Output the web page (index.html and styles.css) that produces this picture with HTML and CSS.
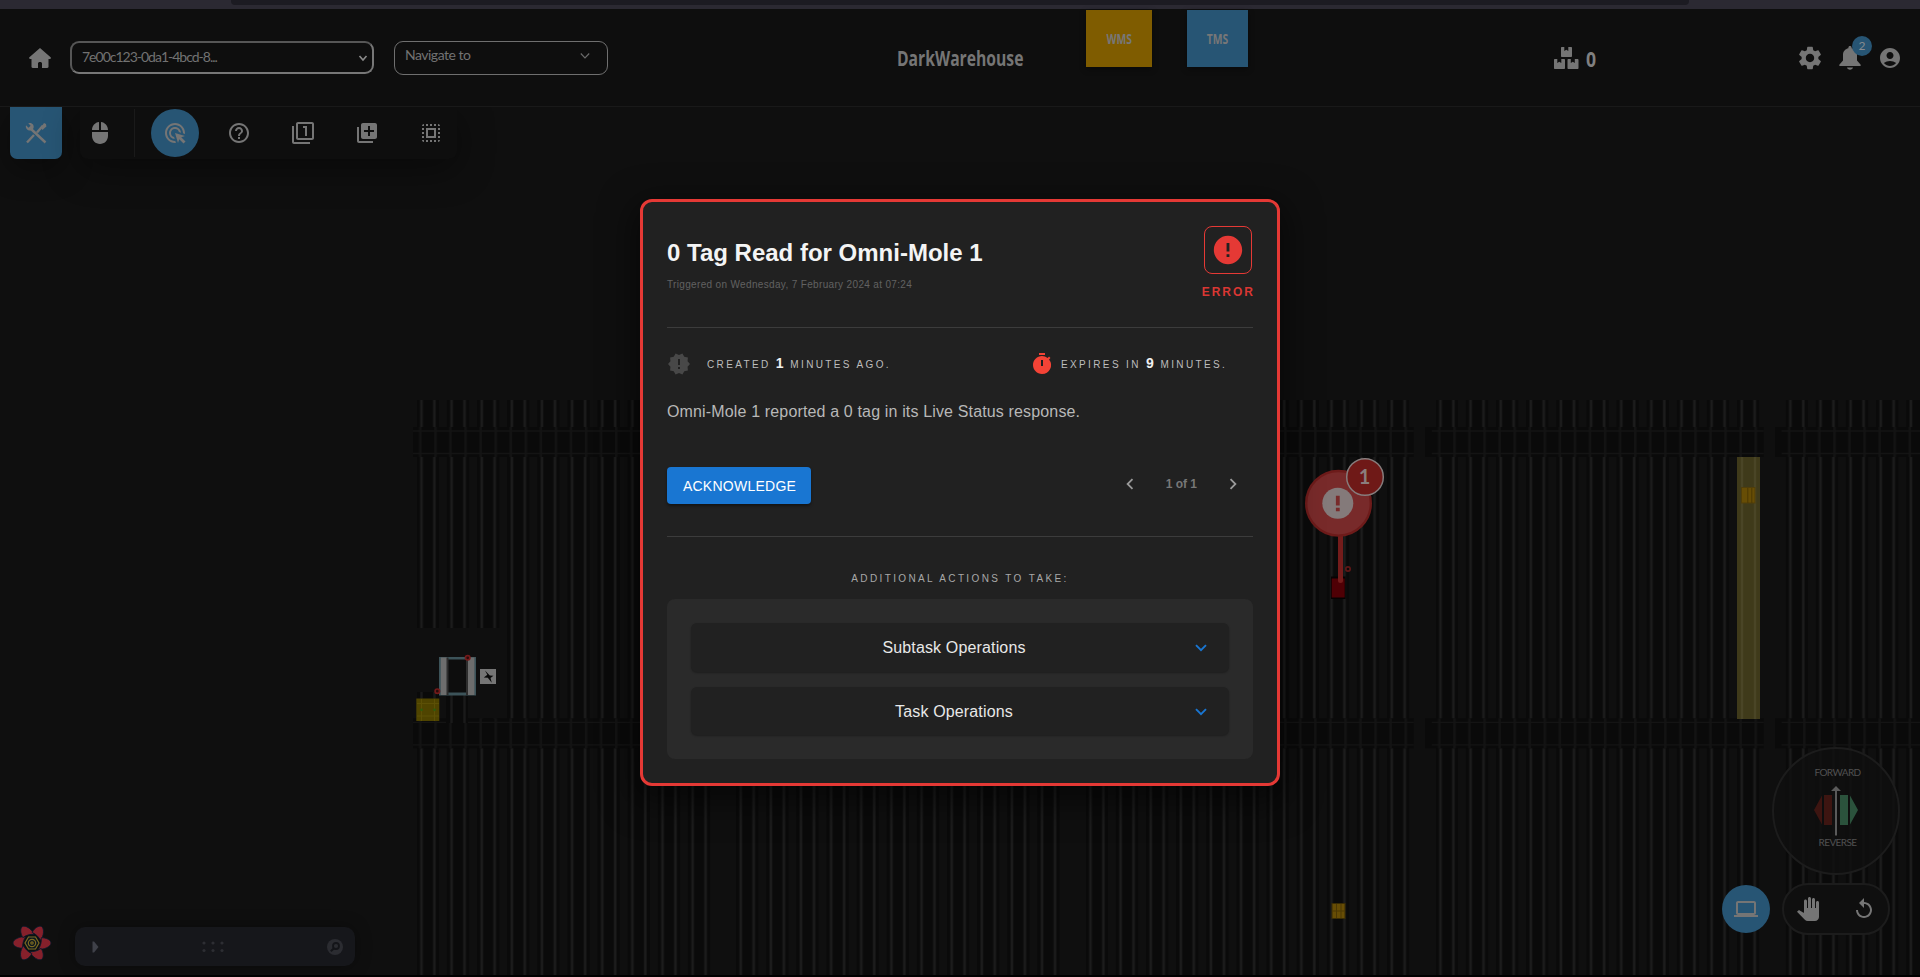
FILE: index.html
```html
<!DOCTYPE html>
<html lang="en">
<head>
<meta charset="utf-8">
<title>DarkWarehouse</title>
<link rel="stylesheet" href="styles.css">
</head>
<body>
<svg class="map" width="1920" height="977" viewBox="0 0 1920 977">
  <defs>
    <pattern id="rails" width="30.13" height="40" patternUnits="userSpaceOnUse">
      <rect width="22.5" height="40" fill="#0a0a0a"/>
      <rect x="3.200" width="3" height="40" fill="#151515"/><rect x="3.900" width="1.700" height="40" fill="#1c1c1c"/>
      <rect x="16.200" width="3" height="40" fill="#151515"/><rect x="16.800" width="1.700" height="40" fill="#1c1c1c"/>
    </pattern>
    <pattern id="ties" width="30.13" height="40" patternUnits="userSpaceOnUse">
      <rect x="2.5" width="2.4" height="40" fill="#131313"/>
      <rect x="17.5" width="2.4" height="40" fill="#131313"/>
    </pattern>
    <g id="band">
      <rect x="-10.5" width="338.5" height="30" fill="#0a0a0a"/>
      <rect width="328" height="30" fill="url(#ties)"/>
      <path d="M-4 4H328M-4 26.5H328" stroke="#141414" stroke-width="1.3"/>
    </g>
    <g id="aisle">
      <rect width="323.8" height="575" fill="url(#rails)"/>
      <use href="#band" y="27"/>
      <use href="#band" y="318.3"/>
    </g>
  </defs>
  <rect width="1920" height="977" fill="#0f0f0f"/>
  <svg x="413" y="400" width="300.5" height="575"><use href="#aisle" x="3.700"/></svg>
  <use href="#aisle" x="736" y="400"/>
  <use href="#aisle" x="1085.7" y="400"/>
  <use href="#aisle" x="1435.7" y="400"/>
  <use href="#aisle" x="1785.6" y="400"/>

  <path d="M413 628H507V718H413z" fill="#0f0f0f"/>
  <path d="M417 692h22v26h-22zM446 695h22v28h-22z" fill="#0a0a0a"/>
  <path d="M421.5 692v8M434.5 692v8M451.5 695v28M464.5 695v28" stroke="#1a1a1a" stroke-width="2.5"/>
  <rect x="416.3" y="698.5" width="23" height="22.5" fill="#4f4400"/>
  <path d="M417 703.5h22M417 716h22M421.5 699v22M434.5 699v22" stroke="#5c5006"/>
  <circle cx="421.5" cy="709.8" r="1.4" fill="#2f5a0c"/><circle cx="434.5" cy="709.8" r="1.4" fill="#2f5a0c"/>
  <rect x="439" y="657" width="37" height="38.5" fill="#3c5359"/>
  <rect x="440.8" y="657.5" width="6.4" height="37.5" fill="#6d6d6d"/>
  <rect x="447" y="659.5" width="20.5" height="33" fill="#0d0d0d"/>
  <rect x="446.5" y="657.5" width="2" height="37.5" fill="#2d2d2d"/>
  <rect x="468" y="657.5" width="6.4" height="37.5" fill="#6d6d6d"/>
  <rect x="466" y="657.5" width="2" height="37.5" fill="#2d2d2d"/>
  <g fill="#2a0b0b" stroke="#731a1a" stroke-width="1.7"><circle cx="467.7" cy="657.8" r="2.2"/><circle cx="437.3" cy="691.2" r="2.2"/></g>
  <rect x="480" y="669" width="16" height="15" fill="#757575"/>
  <path d="M485 670.500l2.300 4.200-3.500 2.800 4 .2 4 5-1.300-4.600 2.900-2.400-3.600-.3z" fill="#080808"/>

  <rect x="1737" y="457" width="23" height="262" fill="#3f3a1a"/>
  <path d="M1742 457V719M1755 457V719" stroke="#4a4526" stroke-width="2.5"/>
  <rect x="1741.5" y="487.5" width="13.5" height="15.5" fill="#674d05" stroke="#503e0a"/>
  <path d="M1747.8 488v15M1751.8 488v15" stroke="#4c3804"/>
  <rect x="1332" y="903.5" width="13" height="15" fill="#674d05" stroke="#3a2c04"/>
  <path d="M1336.5 904v14M1341 904v14M1332 911h13" stroke="#4c3804"/>

  <rect x="1331" y="576.5" width="14.5" height="22.5" fill="#060203"/>
  <rect x="1331.7" y="578.5" width="13" height="19" fill="#4f0005"/>
  <circle cx="1348" cy="569" r="2.2" fill="none" stroke="#5f1717" stroke-width="1.700"/>
  <path d="M1340.5 534V580.5" stroke="#741c1b" stroke-width="5" stroke-linecap="round"/>
  <circle cx="1338.5" cy="503.3" r="32.3" fill="#782a2a" stroke="#6d1b1a" stroke-width="2.4"/>
  <circle cx="1337.8" cy="503.3" r="15.5" fill="#847a7a"/>
  <path d="M1335.9 495.8h3.8v9.600h-3.8zM1335.9 507.8h3.8v3.500h-3.8z" fill="#782a2a"/>
  <circle cx="1365" cy="477" r="18.3" fill="#6f1917" stroke="#867c7c" stroke-width="1.5"/>
  <text x="1364.5" y="484" class="pin-count">1</text>
  <rect y="975" width="1920" height="2" fill="#000"/>
</svg>

<div class="app">
  <div class="chrome"><div class="chrome-tab"></div></div>
  <header class="header">
    <div class="left">
      <svg class="home" viewBox="0 0 22 20" width="22" height="20"><path fill="#757575" d="M11 0 .4 9.300c-.6.6-.3 1.700.6 1.700h1.500v7.800c0 .7.500 1.200 1.200 1.200h5.300v-4.500c0-1 .8-1.500 2-1.500s2 .5 2 1.500V20h5.300c.7 0 1.200-.5 1.200-1.200V11H21c.9 0 1.200-1.100.6-1.700z"/></svg>
      <div class="select device"><span>7e00c123-0da1-4bcd-8...</span><svg width="10" height="8" viewBox="0 0 10 8"><path d="M1.500 2 5 6 8.500 2" fill="none" stroke="#8a8a8a" stroke-width="1.600"/></svg></div>
      <div class="select nav"><span>Navigate to</span><svg width="10" height="8" viewBox="0 0 10 8"><path d="M.8 1.500 5 6 9.200 1.500" fill="none" stroke="#6b6b6b" stroke-width="1.100"/></svg></div>
    </div>
    <div class="brand"><span class="narrow">DarkWarehouse</span></div>
    <div class="tile wms"><span class="narrow">WMS</span></div>
    <div class="tile tms"><span class="narrow">TMS</span></div>
    <div class="stock">
      <svg width="25" height="22" viewBox="0 0 25 22" fill="#757575"><path d="M7 1c0-.6.400-1 1-1h2.300v4l2-1.200 2 1.200V0H17c.6 0 1 .4 1 1v8c0 .6-.4 1-1 1H8c-.6 0-1-.4-1-1zM0 13c0-.6.400-1 1-1h2.300v4l2-1.200 2 1.200v-4H10c.6 0 1 .4 1 1v8c0 .6-.4 1-1 1H1c-.6 0-1-.4-1-1zM13.500 13c0-.6.400-1 1-1h2.300v4l2-1.200 2 1.200v-4h2.700c.6 0 1 .4 1 1v8c0 .6-.4 1-1 1h-9c-.6 0-1-.4-1-1z"/></svg>
      <span class="narrow">0</span>
    </div>
    <div class="tools">
      <svg viewBox="0 0 24 24" width="28" height="28" fill="#757575"><path d="M19.140 12.940c.04-.3.060-.61.060-.94s-.02-.64-.07-.94l2.030-1.580c.18-.14.230-.41.120-.61l-1.920-3.320c-.12-.22-.37-.29-.59-.22l-2.390.960c-.5-.38-1.030-.7-1.620-.94l-.36-2.540A.484.484 0 0 0 13.920 2.400h-3.840c-.24 0-.43.170-.47.410l-.36 2.540c-.59.240-1.130.570-1.620.940l-2.390-.96c-.22-.08-.47 0-.59.220L2.740 8.870c-.12.210-.08.470.120.610l2.030 1.580c-.05.300-.09.630-.09.940s.02.640.07.940l-2.030 1.580c-.18.140-.23.410-.12.610l1.920 3.320c.12.220.370.290.590.220l2.390-.96c.5.380 1.030.700 1.620.940l.36 2.540c.05.240.240.410.480.410h3.840c.24 0 .44-.17.470-.41l.36-2.540c.59-.24 1.130-.56 1.620-.94l2.390.960c.22.080.470 0 .59-.22l1.920-3.320c.12-.22.070-.47-.12-.61zM12 15.600c-1.980 0-3.600-1.620-3.600-3.600s1.620-3.600 3.600-3.600 3.600 1.620 3.600 3.600-1.620 3.600-3.600 3.600z"/></svg>
      <div class="bell"><svg viewBox="0 0 22 24" width="22" height="24" fill="#757575"><path d="M11 0c-1 0-1.600.7-1.600 1.500v.8C6 3 4 5.700 4 9v5.500L.5 18.500c-.7.800-.3 1.500.5 1.500h20c.8 0 1.200-.7.500-1.500L18 14.500V9c0-3.300-2-6-5.400-6.700v-.8C12.600.7 12 0 11 0zM8 21.500c.3 1.300 1.500 2.200 3 2.200s2.700-.9 3-2.200z"/></svg><span class="badge">2</span></div>
      <svg viewBox="0 0 24 24" width="24" height="24" fill="#757575"><path d="M12 2C6.480 2 2 6.480 2 12s4.480 10 10 10 10-4.480 10-10S17.520 2 12 2zm0 4c1.930 0 3.500 1.570 3.500 3.500S13.930 13 12 13s-3.500-1.570-3.500-3.500S10.070 6 12 6zm0 14c-2.030 0-4.430-.82-6.140-2.880C7.550 15.800 9.680 15 12 15s4.450.8 6.140 2.120C16.430 19.180 14.030 20 12 20z"/></svg>
    </div>
  </header>

  <nav class="toolbar">
    <div class="main-tool"><svg viewBox="0 0 24 24" width="24" height="24"><g fill="none" stroke="#757575" stroke-width="2.400"><path d="M3 21.500 10 14M13 11.500l6-7M6.500 7.500 21.500 21.500"/></g><path fill="#757575" d="M17 6.500 20 2l2 1 .4 2.500-4 3.500zM2 4.300 4.500 6.800 6.600 4.800 4.300 2.300C6 1.600 8 2 9 3.600c.8 1.200.9 2.600.4 3.800L7.300 9.300C5.800 9.900 4 9.500 2.900 8.200 1.900 7.100 1.500 5.600 2 4.300z"/></svg></div>
    <div class="panel">
      <div class="tool"><svg viewBox="0 0 24 24" width="24" height="24" fill="#757575"><path d="M13 1.070V9h7c0-4.080-3.050-7.440-7-7.930zM4 15c0 4.420 3.580 8 8 8s8-3.580 8-8v-4H4zm7-13.930C7.050 1.560 4 4.920 4 9h7z"/></svg></div>
      <div class="divider"></div>
      <div class="tool active"><svg viewBox="0 0 24 24" width="24" height="24" fill="#757575"><path d="M11.710 17.990A5.993 5.993 0 0 1 6 12c0-3.310 2.690-6 6-6 3.220 0 5.840 2.530 5.990 5.710l-2.100-.63a3.999 3.999 0 1 0-4.810 4.810zM22 12c0 .3-.01.600-.04.900l-1.970-.59c.010-.1.010-.21.010-.31 0-4.420-3.580-8-8-8s-8 3.580-8 8 3.580 8 8 8c.1 0 .21 0 .31-.01l.59 1.970c-.3.030-.6.040-.9.040-5.520 0-10-4.480-10-10S6.480 2 12 2s10 4.480 10 10zm-3.770 4.260L22 15l-10-3 3 10 1.260-3.770 4.270 4.270 1.980-1.980z"/></svg></div>
      <div class="tool"><svg viewBox="0 0 24 24" width="24" height="24" fill="#757575"><path d="M11 18h2v-2h-2v2zm1-16C6.480 2 2 6.480 2 12s4.480 10 10 10 10-4.480 10-10S17.520 2 12 2zm0 18c-4.410 0-8-3.590-8-8s3.590-8 8-8 8 3.590 8 8-3.590 8-8 8zm0-14c-2.210 0-4 1.790-4 4h2c0-1.100.9-2 2-2s2 .9 2 2c0 2-3 1.750-3 5h2c0-2.250 3-2.500 3-5 0-2.210-1.790-4-4-4z"/></svg></div>
      <div class="tool"><svg viewBox="0 0 24 24" width="24" height="24" fill="#757575"><path d="M3 5H1v16c0 1.100.9 2 2 2h16v-2H3V5zm11 10h2V5h-4v2h2v8zm7-14H7c-1.100 0-2 .9-2 2v14c0 1.100.9 2 2 2h14c1.100 0 2-.9 2-2V3c0-1.100-.9-2-2-2zm0 16H7V3h14v14z"/></svg></div>
      <div class="tool"><svg viewBox="0 0 24 24" width="24" height="24" fill="#757575"><path d="M4 6H2v14c0 1.100.9 2 2 2h14v-2H4V6zm16-4H8c-1.100 0-2 .9-2 2v12c0 1.100.9 2 2 2h12c1.100 0 2-.9 2-2V4c0-1.100-.9-2-2-2zm-1 9h-4v4h-2v-4H9V9h4V5h2v4h4v2z"/></svg></div>
      <div class="tool"><svg viewBox="0 0 24 24" width="24" height="24" fill="#757575"><path d="M3 5h2V3c-1.100 0-2 .9-2 2zm0 8h2v-2H3v2zm4 8h2v-2H7v2zM3 9h2V7H3v2zm10-6h-2v2h2V3zm6 0v2h2c0-1.100-.9-2-2-2zM5 21v-2H3c0 1.100.9 2 2 2zm-2-4h2v-2H3v2zM9 3H7v2h2V3zm2 18h2v-2h-2v2zm8-8h2v-2h-2v2zm0 8c1.100 0 2-.9 2-2h-2v2zm0-12h2V7h-2v2zm0 8h2v-2h-2v2zm-4 4h2v-2h-2v2zm0-16h2V3h-2v2zM7 17h10V7H7v10zm2-8h6v6H9V9z"/></svg></div>
    </div>
  </nav>

  <footer class="bottom">
    <div class="dev">
      <svg class="flower" viewBox="-20 -18 40 36" width="40" height="36">
        <g fill="#85202b" stroke="#071a2b" stroke-width=".8">
          <path id="petal" d="M-6.500-6C-12-7-19-3.500-19 0c0 3 5 5.500 9.800 5.200C-9.800 1-8.500-3-6.500-6z"/>
          <use href="#petal" transform="rotate(60)"/><use href="#petal" transform="rotate(120)"/><use href="#petal" transform="rotate(180)"/><use href="#petal" transform="rotate(240)"/><use href="#petal" transform="rotate(300)"/>
        </g>
        <path d="M-8-.1-4-7H4L8 0 4 7H-4z" fill="#0b1620"/>
        <g fill="none" stroke="#7c6a20" stroke-width="1.200"><path d="M-7 0-3.500-6H3.500L7 0 3.500 6H-3.500z"/><circle r="3.700"/><circle r="1.200"/></g>
      </svg>
      <div class="dock">
        <svg width="7" height="12" viewBox="0 0 7 12"><path d="M.5.5h1.500L6.500 6 2 11.500H.5z" fill="#3f4149"/></svg>
        <svg width="22" height="12" viewBox="0 0 22 12" fill="#2d2e33"><circle cx="2" cy="2" r="1.600"/><circle cx="11" cy="2" r="1.600"/><circle cx="20" cy="2" r="1.600"/><circle cx="2" cy="9.500" r="1.600"/><circle cx="11" cy="9.500" r="1.600"/><circle cx="20" cy="9.500" r="1.600"/></svg>
        <svg width="16" height="16" viewBox="0 0 16 16"><circle cx="8" cy="8" r="8" fill="#2b2c31"/><circle cx="9" cy="7" r="3" fill="none" stroke="#141519" stroke-width="1.800"/><path d="M7 9.200 3.800 12.300" stroke="#141519" stroke-width="2"/></svg>
      </div>
    </div>
    <div class="controls">
      <div class="joystick">
        <span>FORWARD</span>
        <svg width="44" height="50" viewBox="0 0 44 50"><path d="M8 9.500v29L0 24z M10 9h8v30h-8z" fill="#3d1511"/><path d="M26 9h8v30h-8z M36 9.500v29L44 24z" fill="#2b523c"/><path d="M21 4h2v45.500h-2z M17 5 22 0 27 5z" fill="#5a5a5a"/></svg>
        <span>REVERSE</span>
      </div>
      <div class="row">
        <div class="round"><svg viewBox="0 0 24 24" width="24" height="24" fill="#757575"><path d="M20 18c1.100 0 1.990-.9 1.990-2L22 6c0-1.100-.9-2-2-2H4c-1.100 0-2 .9-2 2v10c0 1.100.9 2 2 2H0v2h24v-2h-4zM4 6h16v10H4V6z"/></svg></div>
        <div class="pill">
          <svg viewBox="0 0 24 24" width="24" height="24" fill="#757575"><path d="M23 5.500V20c0 2.200-1.800 4-4 4h-7.300c-1.080 0-2.100-.43-2.850-1.190L1 14.830s1.260-1.230 1.300-1.250c.22-.19.490-.29.790-.29.220 0 .42.060.600.160.04.010 4.310 2.460 4.310 2.460V4c0-.83.670-1.500 1.500-1.500S11 3.170 11 4v7h1V1.500c0-.83.670-1.500 1.500-1.500S15 .670 15 1.500V11h1V2.500c0-.83.670-1.500 1.500-1.500s1.500.67 1.500 1.500V11h1V5.500c0-.83.670-1.500 1.500-1.500s1.500.67 1.500 1.500z"/></svg>
          <svg viewBox="0 0 24 24" width="24" height="24" fill="#757575"><path d="M12 5V1L7 6l5 5V7c3.310 0 6 2.690 6 6s-2.690 6-6 6-6-2.690-6-6H4c0 4.420 3.580 8 8 8s8-3.580 8-8-3.580-8-8-8z"/></svg>
        </div>
      </div>
    </div>
  </footer>
</div>

<section class="modal">
  <div class="head">
    <div>
      <h1>0 Tag Read for Omni-Mole 1</h1>
      <p class="when">Triggered on Wednesday, 7 February 2024 at 07:24</p>
    </div>
    <div class="level">
      <div class="level-box"><svg viewBox="0 0 24 24" width="34" height="34" fill="#e53935"><path d="M12 2C6.480 2 2 6.480 2 12s4.480 10 10 10 10-4.480 10-10S17.520 2 12 2zm1 15h-2v-2h2v2zm0-4h-2V7h2v6z"/></svg></div>
      <span>ERROR</span>
    </div>
  </div>
  <div class="times">
    <div class="time created"><svg viewBox="0 0 24 24" width="24" height="24" fill="#484848"><path d="m23 12-2.440-2.780.34-3.680-3.610-.82-1.890-3.180L12 3 8.600 1.540 6.710 4.720l-3.610.81.340 3.680L1 12l2.440 2.780-.34 3.690 3.610.82 1.890 3.180L12 21l3.400 1.460 1.890-3.180 3.610-.82-.34-3.680zm-10 5h-2v-2h2v2zm0-4h-2V7h2v6z"/></svg><span>CREATED <b>1</b> MINUTES AGO.</span></div>
    <div class="time expires"><svg viewBox="0 0 24 24" width="24" height="24" fill="#f44336"><path d="M9 1h6v2H9zM19.030 7.390l1.420-1.420c-.43-.51-.9-.99-1.410-1.410l-1.420 1.420A8.962 8.962 0 0 0 12 4c-4.970 0-9 4.030-9 9s4.020 9 9 9a8.994 8.994 0 0 0 7.030-14.610zM13 14h-2V8h2v6z"/></svg><span>EXPIRES IN <b>9</b> MINUTES.</span></div>
  </div>
  <p class="message">Omni-Mole 1 reported a 0 tag in its Live Status response.</p>
  <div class="actions">
    <button class="ack">ACKNOWLEDGE</button>
    <div class="pager">
      <svg viewBox="0 0 24 24" width="22" height="22" fill="#9a9a9a"><path d="M15.410 7.410 14 6l-6 6 6 6 1.410-1.410L10.830 12z"/></svg>
      <span>1 of 1</span>
      <svg viewBox="0 0 24 24" width="22" height="22" fill="#9a9a9a"><path d="M10 6 8.590 7.410 13.170 12l-4.580 4.590L10 18l6-6z"/></svg>
    </div>
  </div>
  <div class="more">ADDITIONAL ACTIONS TO TAKE:</div>
  <div class="ops">
    <div class="op"><span>Subtask Operations</span><svg width="12" height="8" viewBox="0 0 12 8"><path d="M1 1.200 6 6.200l5-5" fill="none" stroke="#1976d2" stroke-width="1.900"/></svg></div>
    <div class="op"><span>Task Operations</span><svg width="12" height="8" viewBox="0 0 12 8"><path d="M1 1.200 6 6.200l5-5" fill="none" stroke="#1976d2" stroke-width="1.900"/></svg></div>
  </div>
</section>
</body>
</html>
```
FILE: styles.css
```css
* { box-sizing: border-box; }
html, body { margin: 0; height: 977px; overflow: hidden; background: #0f0f0f; }
body { position: relative; font-family: "Liberation Sans", Arial, sans-serif; }
svg { display: block; flex: none; }
h1, p { margin: 0; }

.map { position: absolute; inset: 0; }
.pin-count { font: bold 20px Lato, sans-serif; fill: #8a7d7d; text-anchor: middle; }

.app { position: relative; height: 977px; display: flex; flex-direction: column; }
.chrome { height: 9px; background: #2b2932; padding: 0 231px 0 231px; }
.chrome-tab { height: 5px; background: #1c1b22; border-radius: 0 0 4px 4px; }

.header {
  position: relative; z-index: 2; height: 98px; display: flex; background: #0e0e0e;
  border-bottom: 1px solid #191919;
}
.left { display: flex; width: 897px; padding-left: 29px; align-items: flex-start; }
.home { margin-top: 39px; }
.select {
  display: flex; justify-content: space-between; color: #727272;
  font-family: Lato, sans-serif; font-size: 14px; letter-spacing: -1px;
}
.device {
  margin: 32px 0 0 19px; width: 304px; height: 33px; border-radius: 9px;
  border: 2px solid; border-color: #565656 #777 #777 #565656; padding: 5px 4px 0 10px;
}
.device span { line-height: 18px; }
.device svg { margin-top: 6px; }
.nav {
  margin: 32px 0 0 20px; width: 214px; height: 34px; border-radius: 9px;
  border: 1px solid #6f6f6f; padding: 4px 17px 0 10px; letter-spacing: -0.5px;
}
.nav span { line-height: 18px; }
.nav svg { margin-top: 6px; }
.narrow { display: inline-block; transform: scaleX(.74); transform-origin: 50% 50%; }
.brand {
  width: 189px; padding-top: 36px; font: bold 21.5px/26px "Open Sans", sans-serif;
  color: #757575; white-space: nowrap;
}
.brand .narrow { transform: scaleX(.73); transform-origin: 0 50%; }
.tile {
  margin-top: 1px; height: 57px; text-align: center; color: #777;
  font: bold 14px/57px "Open Sans", sans-serif; box-shadow: 0 2px 6px rgba(0,0,0,.4);
}
.wms { width: 66px; background: #7f5c00; }
.tms { width: 61px; margin-left: 35px; background: #275574; }
.stock {
  display: flex; gap: 7px; margin: 38px 0 0 306px; width: 242px;
  font: bold 22px/23px "Open Sans", sans-serif; color: #808080;
}
.stock .narrow { transform: scaleX(.8); transform-origin: 0 50%; }
.tools { display: flex; align-items: center; height: 98px; gap: 15px; }
.bell { position: relative; margin-right: 2px; }
.badge {
  position: absolute; left: 13px; top: -10px; width: 20px; height: 20px; border-radius: 50%;
  background: #275574; color: #868b8f; font: 12px/20px Lato, sans-serif; text-align: center;
}

.toolbar { display: flex; padding-left: 10px; gap: 18px; height: 52px; }
.main-tool {
  width: 52px; display: grid; place-items: center; background: #275574; border-radius: 0 0 7px 7px;
  box-shadow: 0 10px 30px rgba(0,0,0,.35);
}
.panel {
  width: 377px; display: flex; align-items: center; background: #0e0e0e; border-radius: 0 0 8px 8px;
  box-shadow: 0 10px 36px rgba(0,0,0,.4);
}
.tool { width: 48px; height: 48px; margin-right: 16px; display: grid; place-items: center; border-radius: 50%; flex: none; }
.tool:first-child { width: 40px; margin-right: 14px; }
.divider { width: 1px; height: 48px; background: #1a1a1a; margin-right: 16px; flex: none; }
.active { background: #275574; }

.bottom { flex: 1; display: flex; justify-content: space-between; align-items: flex-end; }
.dev { display: flex; align-items: flex-start; padding: 0 0 11px 12px; }
.flower { margin-top: -2px; }
.dock {
  margin-left: 23px; width: 280px; height: 39px; border-radius: 10px; background: #16171b;
  display: flex; justify-content: space-between; align-items: center; padding: 0 12px 0 17px;
  box-shadow: 0 0 16px rgba(0,0,0,.35);
}
.controls { width: 204px; padding-bottom: 42px; }
.joystick {
  margin-left: 56px; width: 128px; height: 128px; border-radius: 50%; border: 2px solid #1c1c1c;
  background: rgba(15,15,15,.8); display: flex; flex-direction: column; align-items: center;
  padding: 16px 0 0 3px; font: 10px/14px Lato, sans-serif; letter-spacing: -0.6px; color: #515151;
}
.joystick svg { margin: 7px 0 -1px -4px; }
.row { display: flex; align-items: center; gap: 12px; margin: 8px 0 0 6px; }
.round { width: 48px; height: 48px; border-radius: 50%; background: #275574; display: grid; place-items: center; }
.pill {
  width: 108px; height: 52px; border: 2px solid #1c1c1c; border-radius: 26px; background: #0f0f0f;
  display: flex; align-items: center; justify-content: space-between; padding: 0 12px 0 12px;
}

.modal {
  position: absolute; left: 640px; top: 199px; width: 640px; height: 587px; z-index: 3;
  border: 3px solid #e53935; border-radius: 12px; background: #212121; padding: 24px;
  box-shadow: 0 10px 34px 6px rgba(0,0,0,.5);
}
.head { display: flex; justify-content: space-between; height: 102px; border-bottom: 1px solid #3c3c3c; }
h1 { padding-top: 13px; font: bold 24px/28px "Liberation Sans", Arial, sans-serif; color: #f4f4f4; }
.when { margin-top: 11px; font-size: 10px; line-height: 13px; letter-spacing: .34px; color: #626262; }
.level { display: flex; flex-direction: column; align-items: center; }
.level-box { width: 48px; height: 48px; border: 1px solid #e53935; border-radius: 8px; display: grid; place-items: center; }
.level span { margin: 11px -2px 0 -2px; font-size: 12px; font-weight: bold; line-height: 14px; letter-spacing: 2px; color: #d93733; }
.times { display: flex; height: 71px; align-items: center; }
.time { display: flex; align-items: center; font-size: 10px; letter-spacing: 2.37px; color: #bdbdbd; white-space: nowrap; }
.time span { margin-top: -1px; }
.time b { font-size: 14px; letter-spacing: 1.6px; color: #f0f0f0; }
.created { width: 363px; gap: 16px; }
.expires { gap: 7px; }
.message { font-size: 16px; line-height: 20px; margin-top: 3px; letter-spacing: .15px; color: #b8b8b8; }
.actions {
  display: flex; justify-content: space-between; align-items: flex-start; margin-top: 45px; height: 70px;
  border-bottom: 1px solid #3c3c3c;
}
.ack {
  width: 144px; height: 37px; border: 0; border-radius: 4px; background: #1976d2; color: #fff; padding: 1px 0 0 1px;
  font: 14px "Liberation Sans", Arial, sans-serif; letter-spacing: .25px; box-shadow: 0 2px 3px rgba(0,0,0,.4);
}
.pager { display: flex; align-items: center; height: 34px; padding-right: 9px; gap: 25px; font-size: 12px; font-weight: bold; color: #777; }
.more { margin-top: 35px; height: 27px; text-align: center; font-size: 10px; line-height: 14px; letter-spacing: 2.37px; color: #a8a8a8; }
.ops { height: 160px; border-radius: 8px; background: #2a2a2a; padding: 24px; display: flex; flex-direction: column; gap: 15px; }
.op {
  height: 49px; border-radius: 6px; background: #212121; display: flex; align-items: center; padding: 2px 22px 0 0;
  box-shadow: 0 1px 2px rgba(0,0,0,.3); font-size: 16px; letter-spacing: .15px; color: #e8e8e8;
}
.op span { flex: 1; text-align: center; padding-left: 22px; }
```
